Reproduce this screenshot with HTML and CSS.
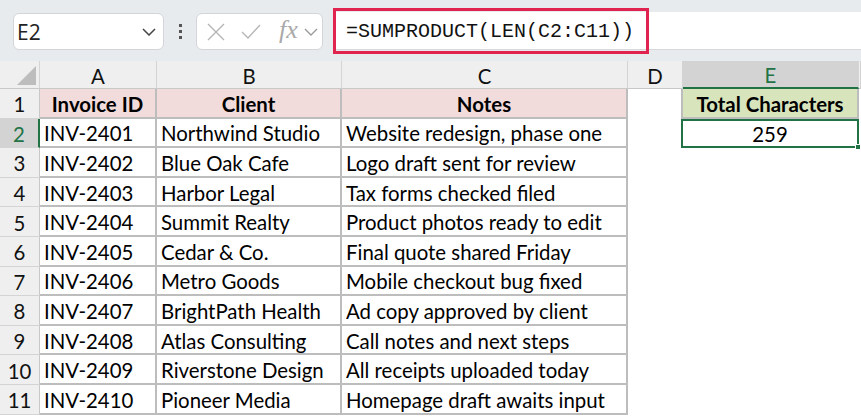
FILE: index.html
```html
<!DOCTYPE html>
<html lang="en">
<head>
    <meta charset="UTF-8">
    <title>Total Characters</title>
    <link rel="stylesheet" href="styles.css">
</head>
<body>
    <div class="toolbar">
        <div class="name-box">
            <span>E2</span>
            <svg class="chev" width="14" height="8" viewBox="0 0 14 8"><path d="M1 1l6 6 6-6" fill="none" stroke="#444" stroke-width="1.5"/></svg>
        </div>
        <div class="kebab"><i></i><i></i><i></i></div>
        <div class="fx-box">
            <svg width="18" height="18" viewBox="0 0 18 18"><path d="M1 1l16 16M17 1L1 17" stroke="#b5b5b5" stroke-width="1.4"/></svg>
            <svg width="20" height="16" viewBox="0 0 20 16"><path d="M1 8l6 6L19 1" fill="none" stroke="#b5b5b5" stroke-width="1.4"/></svg>
            <span class="fx">fx</span>
            <svg width="14" height="8" viewBox="0 0 14 8"><path d="M1 1l6 6 6-6" fill="none" stroke="#9a9a9a" stroke-width="1.4"/></svg>
        </div>
        <div class="formula-bar">
            <span class="formula">=SUMPRODUCT(LEN(C2:C11))</span>
        </div>
    </div>

    <div class="sheet">
        <div class="corner"><span class="tri"></span></div>
        <div class="col-hdr">A</div>
        <div class="col-hdr">B</div>
        <div class="col-hdr">C</div>
        <div class="col-hdr">D</div>
        <div class="col-hdr active">E</div>
        <div class="col-hdr"></div>

        <div class="row-hdr">1</div>
        <div class="cell head">Invoice ID</div>
        <div class="cell head">Client</div>
        <div class="cell head">Notes</div>
        <div class="blank"></div>
        <div class="total-head">Total Characters</div>
        <div class="blank"></div>

        <div class="row-hdr active">2</div>
        <div class="cell">INV-2401</div>
        <div class="cell">Northwind Studio</div>
        <div class="cell">Website redesign, phase one</div>
        <div class="blank"></div>
        <div class="total-val">259<span class="handle"></span></div>
        <div class="blank"></div>

        <div class="row-hdr">3</div>
        <div class="cell">INV-2402</div>
        <div class="cell">Blue Oak Cafe</div>
        <div class="cell">Logo draft sent for review</div>
        <div class="blank"></div><div class="blank"></div><div class="blank"></div>

        <div class="row-hdr">4</div>
        <div class="cell">INV-2403</div>
        <div class="cell">Harbor Legal</div>
        <div class="cell">Tax forms checked filed</div>
        <div class="blank"></div><div class="blank"></div><div class="blank"></div>

        <div class="row-hdr">5</div>
        <div class="cell">INV-2404</div>
        <div class="cell">Summit Realty</div>
        <div class="cell">Product photos ready to edit</div>
        <div class="blank"></div><div class="blank"></div><div class="blank"></div>

        <div class="row-hdr">6</div>
        <div class="cell">INV-2405</div>
        <div class="cell">Cedar &amp; Co.</div>
        <div class="cell">Final quote shared Friday</div>
        <div class="blank"></div><div class="blank"></div><div class="blank"></div>

        <div class="row-hdr">7</div>
        <div class="cell">INV-2406</div>
        <div class="cell">Metro Goods</div>
        <div class="cell">Mobile checkout bug fixed</div>
        <div class="blank"></div><div class="blank"></div><div class="blank"></div>

        <div class="row-hdr">8</div>
        <div class="cell">INV-2407</div>
        <div class="cell">BrightPath Health</div>
        <div class="cell">Ad copy approved by client</div>
        <div class="blank"></div><div class="blank"></div><div class="blank"></div>

        <div class="row-hdr">9</div>
        <div class="cell">INV-2408</div>
        <div class="cell">Atlas Consulting</div>
        <div class="cell">Call notes and next steps</div>
        <div class="blank"></div><div class="blank"></div><div class="blank"></div>

        <div class="row-hdr">10</div>
        <div class="cell">INV-2409</div>
        <div class="cell">Riverstone Design</div>
        <div class="cell">All receipts uploaded today</div>
        <div class="blank"></div><div class="blank"></div><div class="blank"></div>

        <div class="row-hdr">11</div>
        <div class="cell">INV-2410</div>
        <div class="cell">Pioneer Media</div>
        <div class="cell">Homepage draft awaits input</div>
        <div class="blank"></div><div class="blank"></div><div class="blank"></div>
    </div>
</body>
</html>
```

FILE: styles.css
```css
* { margin: 0; padding: 0; box-sizing: border-box; }
body { width: 861px; height: 416px; overflow: hidden; background: #fff; font-family: Lato, "Open Sans", sans-serif; color: #000; }

.toolbar { height: 61px; background: #e8ebee; display: flex; align-items: flex-start; padding-top: 13px; padding-left: 13px; }
.name-box { width: 151px; height: 37px; background: #fff; border: 1px solid #d3d5d8; border-radius: 6px; display: flex; align-items: center; justify-content: space-between; padding: 0 7px 0 3px; font-family: "Open Sans", sans-serif; font-size: 21px; color: #222; }
.kebab { width: 32px; height: 37px; display: flex; flex-direction: column; align-items: center; justify-content: center; gap: 3px; }
.kebab i { width: 3px; height: 3px; background: #555; display: block; }
.fx-box { width: 127px; height: 37px; background: #fff; border: 1px solid #d3d5d8; border-radius: 6px; display: flex; align-items: center; padding-left: 10px; }
.fx-box svg:first-child { margin-right: 16px; }
.fx-box svg:nth-child(2) { margin-right: 18px; }
.fx { font-family: "Liberation Serif", serif; font-style: italic; font-size: 26px; color: #a9a9a9; margin-right: 6px; line-height: 1; margin-top: -4px; }
.formula-bar { flex: 1; height: 38px; margin-left: 10px; margin-top: -1px; background: #fff; border-bottom: 1px solid #d6d8db; display: flex; align-items: center; }
.formula { width: 316px; height: 46px; border: 3px solid #e0244f; font-family: "Liberation Mono", monospace; font-size: 20px; display: flex; align-items: center; padding-left: 10px; padding-top: 1px; color: #111; }

.sheet { display: grid; grid-template-columns: 40px 117px 185px 286px 55px 176px 1fr; grid-template-rows: 28px repeat(11, 29.6px); font-size: 20.4px; }
.corner { background: #efefef; border-right: 1px solid #d4d4d4; border-bottom: 1px solid #c8c8c8; position: relative; }
.tri { position: absolute; right: 3px; bottom: 3px; width: 0; height: 0; border-left: 19px solid transparent; border-bottom: 19px solid #bdbdbd; }
.col-hdr { background: #efefef; border-right: 1px solid #d4d4d4; border-bottom: 1px solid #c8c8c8; display: flex; align-items: center; justify-content: center; color: #111; padding-top: 2px; }
.col-hdr.active { background: #d3d3d3; color: #217346; border-bottom: 2px solid #217346; }
.row-hdr { background: #efefef; border-right: 1px solid #c8c8c8; border-bottom: 1px solid #d4d4d4; display: flex; align-items: center; justify-content: center; color: #111; padding-top: 2px; }
.row-hdr.active { background: #d3d3d3; color: #217346; border-right: 2px solid #217346; }

.cell { border-right: 2px solid #bdbdbd; border-bottom: 2px solid #bdbdbd; display: flex; align-items: center; padding: 2px 0 0 4px; white-space: nowrap; }
.cell.head { background: #f2dcdb; font-weight: 700; justify-content: center; padding-left: 0; }
.blank { background: #fff; }
.total-head { background: #d8e4bc; font-weight: 700; border: 2px solid #bdbdbd; border-top: none; display: flex; align-items: center; justify-content: center; margin-left: -2px; padding-top: 2px; }
.total-val { position: relative; border: 2px solid #217346; display: flex; align-items: center; justify-content: center; margin-left: -2px; padding-top: 2px; }
.handle { position: absolute; right: -4px; bottom: -4px; width: 6px; height: 6px; background: #217346; border: 1px solid #fff; }
```
